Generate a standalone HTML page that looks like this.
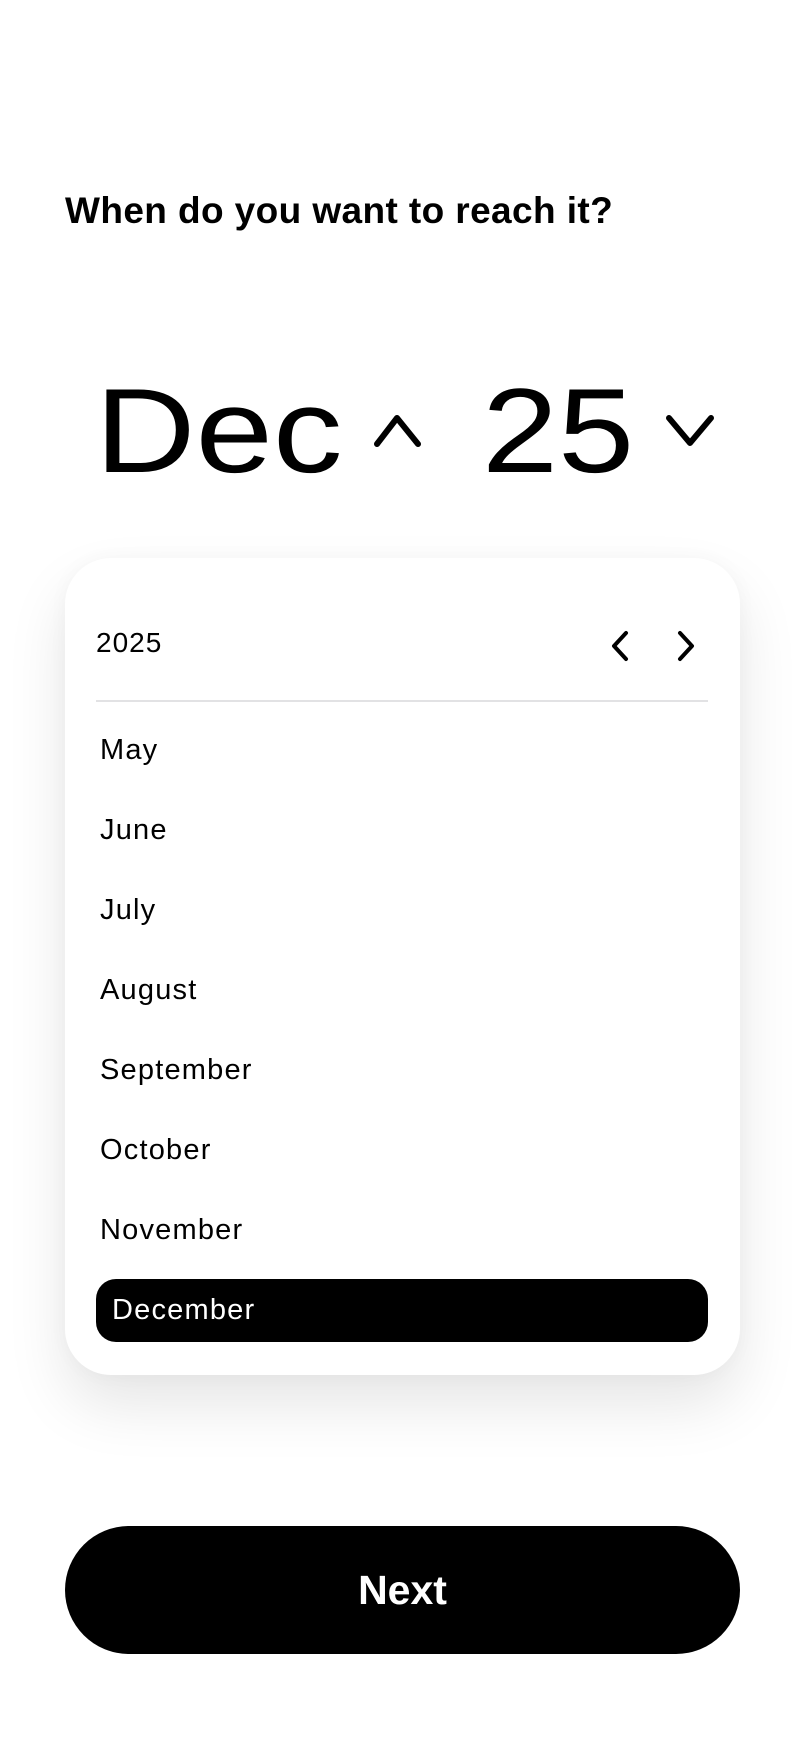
<!DOCTYPE html>
<html><head><meta charset="utf-8"><style>
html,body{margin:0;padding:0;background:#fff;}
body{width:804px;height:1748px;position:relative;overflow:hidden;font-family:"Liberation Sans",sans-serif;color:#000;}
.abs{position:absolute;}
.title{left:65px;top:189px;font-size:37px;font-weight:bold;line-height:44px;white-space:nowrap;letter-spacing:0.4px;}
.big{font-size:120px;line-height:120px;top:371px;transform-origin:0 0;}
.card{left:65px;top:558px;width:675px;height:817px;background:#fff;border-radius:46px;box-shadow:0 30px 60px rgba(0,0,0,0.10),0 0 20px rgba(0,0,0,0.03);}
.m{left:100px;font-size:29px;line-height:30px;letter-spacing:1.2px;}
.pill{left:96px;top:1279px;width:612px;height:63px;background:#000;border-radius:20px;}
.btn{left:65px;top:1526px;width:675px;height:128px;background:#000;border-radius:64px;color:#fff;font-weight:bold;font-size:41px;line-height:128px;text-align:center;}
</style></head><body>
<div class="abs title">When do you want to reach it?</div>
<div class="abs big" style="left:95px;transform:scaleX(1.16)">Dec</div>
<div class="abs big" style="left:482px;transform:scaleX(1.14)">25</div>
<svg class="abs" style="left:370px;top:410px" width="56" height="40"><path d="M7 34 L27 8 L48 34" fill="none" stroke="#000" stroke-width="6" stroke-linecap="round" stroke-linejoin="round"/></svg>
<svg class="abs" style="left:662px;top:410px" width="56" height="40"><path d="M7 8 L28 33 L49 8" fill="none" stroke="#000" stroke-width="6" stroke-linecap="round" stroke-linejoin="round"/></svg>
<div class="abs card"></div>
<div class="abs" style="left:96px;top:628px;font-size:28px;line-height:30px;letter-spacing:1px;">2025</div>
<svg class="abs" style="left:604px;top:628px" width="100" height="38"><path d="M22 5 L10 18 L22 31" fill="none" stroke="#000" stroke-width="4" stroke-linecap="round" stroke-linejoin="round"/><path d="M76 5 L88 18 L76 31" fill="none" stroke="#000" stroke-width="4" stroke-linecap="round" stroke-linejoin="round"/></svg>
<div class="abs" style="left:96px;top:700px;width:612px;height:2px;background:#e2e2e4"></div>
<div class="abs m" style="top:735px">May</div>
<div class="abs m" style="top:815px">June</div>
<div class="abs m" style="top:895px">July</div>
<div class="abs m" style="top:975px">August</div>
<div class="abs m" style="top:1055px">September</div>
<div class="abs m" style="top:1135px">October</div>
<div class="abs m" style="top:1215px">November</div>
<div class="abs pill"></div>
<div class="abs m" style="top:1295px;left:112px;color:#fff">December</div>
<div class="abs btn">Next</div>
</body></html>
